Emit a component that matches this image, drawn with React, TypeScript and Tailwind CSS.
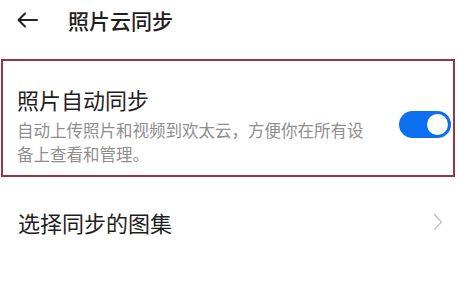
import React from "react";

const font = { fontFamily: '"Noto Sans CJK SC", "Noto Sans", sans-serif' };

const App = () => {
  return (
    <div className="w-[458px] h-[284px] bg-white overflow-hidden" style={font}>
      {/* header */}
      <div className="h-[40px] flex items-center pl-[17px]">
        <svg width="21" height="16" viewBox="0 0 21 16" fill="none" stroke="#222" strokeWidth="2" strokeLinecap="round" strokeLinejoin="round">
          <path d="M20 8H2" />
          <path d="M8 1.5L1.5 8L8 14.5" />
        </svg>
        <span className="ml-[30px] text-[21px] leading-[28px] font-medium text-[#1f1f1f]">照片云同步</span>
      </div>

      {/* highlighted setting */}
      <div className="mt-[19px] ml-[1px] w-[454px] h-[118px] border-2 border-[#93364a] flex items-start justify-between pt-[24px] pl-[14px] pr-[2px]">
        <div className="flex flex-col">
          <span className="text-[22px] leading-[28px] text-[#1f1f1f]">照片自动同步</span>
          <p className="mt-[5px] text-[16.5px] leading-[24px] text-[#8e8e8e] whitespace-nowrap">
            自动上传照片和视频到欢太云，方便你在所有设
            <br />
            备上查看和管理。
          </p>
        </div>
        <div className="mt-[26px] w-[52px] h-[27px] rounded-full bg-[#0b6ff0] flex items-center justify-end pr-[3px]">
          <div className="w-[21px] h-[21px] rounded-full bg-white" />
        </div>
      </div>

      {/* second row */}
      <div className="h-[90px] flex items-center justify-between pl-[18px] pr-[15px]">
        <span className="text-[22px] leading-[28px] text-[#1f1f1f]">选择同步的图集</span>
        <svg width="10" height="18" viewBox="0 0 10 18" fill="none" stroke="#c4c4c4" strokeWidth="1.6" strokeLinecap="round" strokeLinejoin="round">
          <path d="M1.5 1.5L8.5 9L1.5 16.5" />
        </svg>
      </div>
    </div>
  );
};

export default App;
